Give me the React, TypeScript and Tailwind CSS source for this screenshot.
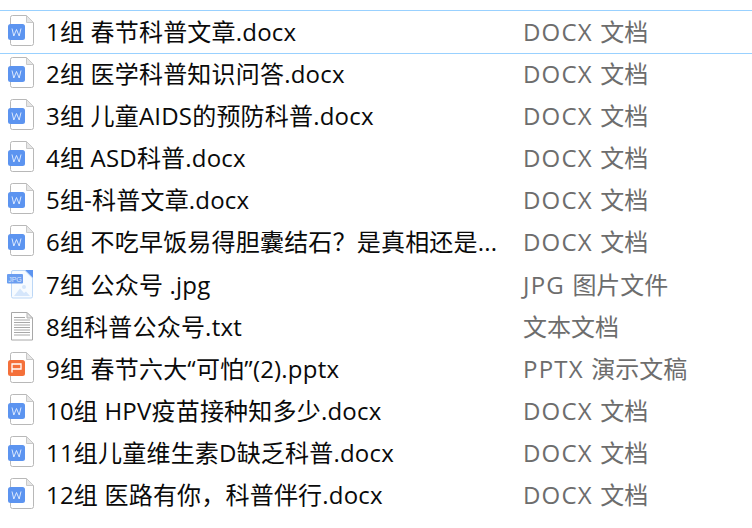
// Explorer-style file list
type Kind = "word" | "jpg" | "txt" | "ppt";

const files: { name: string; ext?: string; type: string; kind: Kind }[] = [
  { name: "1组 春节科普文章.docx", ext: "DOCX", type: "文档", kind: "word" },
  { name: "2组 医学科普知识问答.docx", ext: "DOCX", type: "文档", kind: "word" },
  { name: "3组 儿童AIDS的预防科普.docx", ext: "DOCX", type: "文档", kind: "word" },
  { name: "4组 ASD科普.docx", ext: "DOCX", type: "文档", kind: "word" },
  { name: "5组-科普文章.docx", ext: "DOCX", type: "文档", kind: "word" },
  { name: "6组 不吃早饭易得胆囊结石？是真相还是...", ext: "DOCX", type: "文档", kind: "word" },
  { name: "7组 公众号 .jpg", ext: "JPG", type: "图片文件", kind: "jpg" },
  { name: "8组科普公众号.txt", type: "文本文档", kind: "txt" },
  { name: "9组 春节六大“可怕”(2).pptx", ext: "PPTX", type: "演示文稿", kind: "ppt" },
  { name: "10组 HPV疫苗接种知多少.docx", ext: "DOCX", type: "文档", kind: "word" },
  { name: "11组儿童维生素D缺乏科普.docx", ext: "DOCX", type: "文档", kind: "word" },
  { name: "12组 医路有你，科普伴行.docx", ext: "DOCX", type: "文档", kind: "word" },
];

function Sheet() {
  return (
    <>
      <path d="M12.500 3.500H26.500L33.500 10.500V31.500a2 2 0 0 1-2 2H12.500a2 2 0 0 1-2-2V5.500a2 2 0 0 1 2-2Z" fill="#fff" stroke="#b8b8b8" />
      <path d="M26.500 3.500V10.500H33.500Z" fill="#e6e6e6" stroke="#c8c8c8" strokeLinejoin="round" />
    </>
  );
}

function FileIcon({ kind }: { kind: Kind }) {
  return (
    <svg width="36" height="40" viewBox="0 0 36 40" className="shrink-0">
      {kind === "word" && (
        <>
          <Sheet />
          <rect x="8" y="12" width="17" height="16" rx="2.500" fill="#5c94f0" />
          <path d="M12 16.500L13.800 24L16.500 17.500L19.200 24L21 16.500" fill="none" stroke="#e8f0ff" strokeWidth="0.900" />
        </>
      )}
      {kind === "jpg" && (
        <>
          <path d="M13 5.500H25L32.500 13V31.500a1.500 1.500 0 0 1-1.500 1.500H13a1.500 1.500 0 0 1-1.500-1.500V7a1.500 1.500 0 0 1 1.500-1.500Z" fill="#f7fbff" stroke="#bcd7f6" />
          <path d="M25 5H33V13Z" fill="#5c94f0" />
          <rect x="7" y="9" width="16" height="9.500" rx="1" fill="#6a9df0" />
          <text x="15" y="16.500" textAnchor="middle" fontSize="7" fill="#dce8ff" fontFamily="'Liberation Sans', sans-serif">JPG</text>
          <circle cx="24" cy="22" r="2" fill="#d5e6fb" />
          <path d="M14 31L20 23.500L24 28L26 26.500L30 31Z" fill="#d5e6fb" />
        </>
      )}
      {kind === "txt" && (
        <>
          <path d="M11.500 5.500H27L32.500 11V33H11.500Z" fill="#fff" stroke="#a8a8a8" />
          <path d="M27 5.500V11H32.500Z" fill="#e6e6e6" stroke="#b5b5b5" />
          <path d="M14 10.500H25M14 13H30M14 15.500H30M14 18H30M14 20.500H30M14 23H30M14 25.500H30M14 28H30" stroke="#a8a8a8" strokeWidth="1" />
        </>
      )}
      {kind === "ppt" && (
        <>
          <Sheet />
          <rect x="8" y="11" width="17" height="16" rx="2.500" fill="#f4703a" />
          <path d="M12 23.500V15H21V20H12" fill="none" stroke="#fff" strokeWidth="1.300" />
        </>
      )}
    </svg>
  );
}

export default function App() {
  return (
    <div className="w-[752px] h-[528px] overflow-hidden bg-white pt-[10px] font-['Open_Sans','Noto_Sans_CJK_SC',sans-serif] text-[24px]">
      {files.map((f, i) => (
        <div
          key={f.name}
          className={
            i === 0
              ? "flex items-center h-[44px] mb-[-1px] border-y border-[#99d1ff]"
              : i === 6
                ? "flex items-center h-[42px] mt-[1px]"
                : "flex items-center h-[42px]"
          }
        >
          <div className="w-[46px] shrink-0 flex items-center">
            <FileIcon kind={f.kind} />
          </div>
          <div className="w-[477px] shrink-0 whitespace-nowrap text-[#0a0a0a] tracking-[0.2px]">{f.name}</div>
          <div className="text-[#6d6d6d] whitespace-nowrap">
            {f.ext && <span className="tracking-[1.2px]">{f.ext} </span>}
            {f.type}
          </div>
        </div>
      ))}
    </div>
  );
}
